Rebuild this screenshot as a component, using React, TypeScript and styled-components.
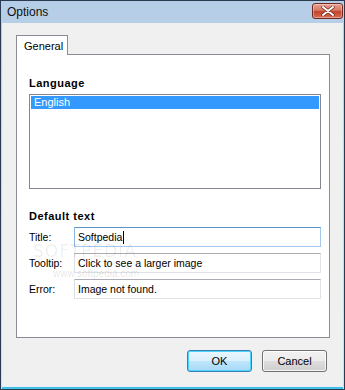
import styled, { createGlobalStyle } from 'styled-components';

const GlobalStyle = createGlobalStyle`
  html, body {
    margin: 0;
    padding: 0;
    background: #1b2a3a;
  }
  body {
    font-family: "Liberation Sans", Arial, sans-serif;
    font-size: 10.5px;
    color: #000;
  }
`;

const Window = styled.div`
  position: relative;
  width: 345px;
  height: 390px;
  box-sizing: border-box;
  display: flex;
  flex-direction: column;
  border: 1px solid #2a3b4f;
  background: linear-gradient(180deg, #b5cde6 0%, #c4d8ee 40%, #cfe0f2 100%);
  overflow: hidden;
`;

const TitleBar = styled.div`
  height: 22px;
  display: flex;
  align-items: center;
  justify-content: space-between;
  padding: 0 1px 0 6px;

  span {
    font-size: 12px;
    color: #101010;
  }
`;

const CloseButton = styled.button`
  width: 31px;
  height: 16px;
  margin-top: -2px;
  padding: 0;
  display: flex;
  align-items: center;
  justify-content: center;
  border: 1px solid #6e2a22;
  border-radius: 3px;
  background: linear-gradient(180deg, #e8a493 0%, #d7765f 45%, #c2432b 55%, #d8705a 100%);
  box-shadow: inset 0 0 0 1px rgba(255, 255, 255, 0.35);
`;

const Body = styled.div`
  flex: 1;
  margin: 0 1px 2px 1px;
  border-left: 1px solid #e6eef8;
  border-right: 1px solid #e6eef8;
  border-bottom: 1px solid #e6eef8;
  background: #f0f0f0;
  padding: 12px 0 0 13px;
  display: flex;
  flex-direction: column;
  box-shadow: 0 2px 0 #3fc0e6;
`;

const TabStrip = styled.div`
  display: flex;
  height: 20px;
  margin-bottom: -1px;
  position: relative;
  z-index: 1;
`;

const Tab = styled.div`
  width: 52px;
  box-sizing: border-box;
  border: 1px solid #898c95;
  border-bottom: none;
  background: #fff;
  padding: 4px 0 0 7px;
  font-size: 11px;
`;

const Panel = styled.div`
  width: 314px;
  height: 284px;
  box-sizing: border-box;
  border: 1px solid #898c95;
  background: #fff;
  padding: 22px 8px 0 12px;
  display: flex;
  flex-direction: column;
`;

const GroupLabel = styled.div`
  font-weight: bold;
  font-size: 11px;
  letter-spacing: 0.5px;
  line-height: 13px;
  margin-bottom: 4px;
`;

const ListBox = styled.div`
  height: 95px;
  box-sizing: border-box;
  border: 1px solid #828790;
  padding: 1px;
  margin-bottom: 21px;
`;

const ListItem = styled.div<{ $selected?: boolean }>`
  height: 13px;
  line-height: 13px;
  padding-left: 3px;
  font-size: 11px;
  color: ${p => (p.$selected ? '#fff' : '#000')};
  background: ${p => (p.$selected ? '#3399ff' : 'transparent')};
`;

const FieldRow = styled.div`
  display: flex;
  align-items: center;
  margin-bottom: 6px;
`;

const FieldLabel = styled.label`
  width: 45px;
  font-size: 10.5px;
`;

const TextInput = styled.div<{ $focused?: boolean }>`
  width: 247px;
  height: 20px;
  box-sizing: border-box;
  border: 1px solid ${p => (p.$focused ? '#a4c9ef' : '#e0e3e8')};
  border-top-color: ${p => (p.$focused ? '#5a94c8' : '#abadb3')};
  border-left-color: ${p => (p.$focused ? '#8fb7e3' : '#dbdfe6')};
  padding: 0 3px;
  display: flex;
  align-items: center;
  font-size: 10.5px;
  background: #fff;
`;

const Caret = styled.span`
  display: inline-block;
  width: 1px;
  height: 13px;
  background: #000;
  margin-left: 1px;
`;

const ButtonRow = styled.div`
  display: flex;
  justify-content: flex-end;
  gap: 10px;
  padding: 12px 15px 0 0;
`;

const DialogButton = styled.button<{ $default?: boolean }>`
  width: 65px;
  height: 22px;
  box-sizing: border-box;
  font-family: "Liberation Sans", Arial, sans-serif;
  font-size: 11px;
  color: #000;
  border-radius: 3px;
  border: 1px solid ${p => (p.$default ? '#3c7fb1' : '#707070')};
  background: ${p =>
    p.$default
      ? 'linear-gradient(180deg, #eaf6fd 0%, #d9f0fc 50%, #bee6fd 51%, #a7d9f5 100%)'
      : 'linear-gradient(180deg, #f2f2f2 0%, #ebebeb 50%, #dddddd 51%, #cfcfcf 100%)'};
  box-shadow: inset 0 0 0 1px ${p => (p.$default ? '#48d4ff' : 'rgba(255,255,255,0.8)')};
  padding: 0;
`;

const Watermark = styled.div`
  position: absolute;
  left: 32px;
  top: 240px;
  font-family: "DejaVu Sans", sans-serif;
  font-size: 17px;
  letter-spacing: 1px;
  color: rgba(0, 0, 0, 0.07);
  pointer-events: none;

  sup {
    font-size: 6px;
    vertical-align: top;
  }
`;

const WatermarkUrl = styled.div`
  position: absolute;
  left: 52px;
  top: 267px;
  font-size: 10px;
  color: rgba(0, 0, 0, 0.12);
  pointer-events: none;
`;

const CloseIcon = () => (
  <svg width="14" height="10" viewBox="0 0 14 10">
    <path d="M2 1 L12 9 M12 1 L2 9" stroke="#5a1a10" strokeWidth="3.2" strokeLinecap="round" />
    <path d="M2 1 L12 9 M12 1 L2 9" stroke="#fff" strokeWidth="2" strokeLinecap="round" />
  </svg>
);

const App = () => {
  return (
    <>
      <GlobalStyle />
      <Window>
        <TitleBar>
          <span>Options</span>
          <CloseButton type='button'><CloseIcon /></CloseButton>
        </TitleBar>
        <Body>
          <TabStrip>
            <Tab>General</Tab>
          </TabStrip>
          <Panel>
            <GroupLabel>Language</GroupLabel>
            <ListBox>
              <ListItem $selected>English</ListItem>
            </ListBox>
            <GroupLabel>Default text</GroupLabel>
            <FieldRow>
              <FieldLabel>Title:</FieldLabel>
              <TextInput $focused>Softpedia<Caret /></TextInput>
            </FieldRow>
            <FieldRow>
              <FieldLabel>Tooltip:</FieldLabel>
              <TextInput>Click to see a larger image</TextInput>
            </FieldRow>
            <FieldRow>
              <FieldLabel>Error:</FieldLabel>
              <TextInput>Image not found.</TextInput>
            </FieldRow>
          </Panel>
          <ButtonRow>
            <DialogButton type='button' $default>OK</DialogButton>
            <DialogButton type='button'>Cancel</DialogButton>
          </ButtonRow>
        </Body>
        <Watermark aria-hidden>SOFTPEDIA<sup>™</sup></Watermark>
        <WatermarkUrl aria-hidden>www.softpedia.com</WatermarkUrl>
      </Window>
    </>
  );
};

export default App;
